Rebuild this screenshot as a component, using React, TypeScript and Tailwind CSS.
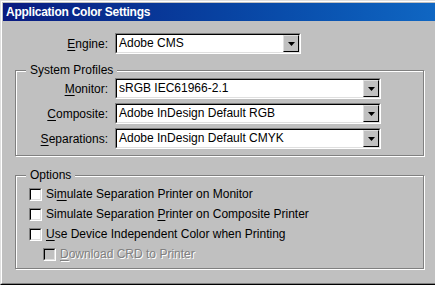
import React from 'react';

const face = 'bg-[#c0c0c0]';

const Key: React.FC<{ children: React.ReactNode }> = ({ children }) => (
  <span className="underline underline-offset-[2px]">{children}</span>
);

const Dropdown: React.FC<{ value: string; width: string }> = ({ value, width }) => (
  <div className={`${width} h-[21px] border border-t-[#808080] border-l-[#808080] border-b-white border-r-white`}>
    <div className="flex h-full border border-t-black border-l-black border-b-[#dfdfdf] border-r-[#dfdfdf] bg-white">
      <div className="flex-1 pl-[2px] leading-[17px] text-black">{value}</div>
      <div className={`flex w-[16px] items-center justify-center ${face} border border-t-[#dfdfdf] border-l-[#dfdfdf] border-b-black border-r-black`}>
        <svg width="7" height="4" viewBox="0 0 7 4">
          <path d="M0 0h7L3.5 4z" fill="#000" />
        </svg>
      </div>
    </div>
  </div>
);

const Row: React.FC<{ label: React.ReactNode; value: string; width: string; labelWidth: string }> = ({ label, value, width, labelWidth }) => (
  <div className="flex items-center">
    <div className={`${labelWidth} pr-[7px] text-right`}>{label}</div>
    <Dropdown value={value} width={width} />
  </div>
);

const Checkbox: React.FC<{ label: React.ReactNode; disabled?: boolean }> = ({ label, disabled }) => (
  <div className="flex h-[20px] items-center gap-[4px]">
    <div className="h-[13px] w-[13px] border border-t-[#808080] border-l-[#808080] border-b-white border-r-white">
      <div className={`h-full w-full border border-t-black border-l-black border-b-[#dfdfdf] border-r-[#dfdfdf] ${disabled ? face : 'bg-white'}`} />
    </div>
    <span className={disabled ? 'text-[#808080] [text-shadow:1px_1px_0_#fff]' : 'text-black'}>{label}</span>
  </div>
);

const Group: React.FC<{ title: string; height: string; children: React.ReactNode }> = ({ title, height, children }) => (
  <div className={`relative w-[409px] ${height} border border-[#808080] shadow-[inset_1px_1px_0_#fff,1px_1px_0_#fff]`}>
    <span className={`absolute -top-[9px] left-[10px] ${face} px-[4px] leading-[16px]`}>{title}</span>
    {children}
  </div>
);

export default function App() {
  return (
    <div className="h-[285px] w-[435px] overflow-hidden">
      <div
        className={`h-[285px] w-[445px] ${face} border-t border-l border-t-[#dfdfdf] border-l-[#dfdfdf] border-b border-b-black text-[12px] text-black`}
        style={{ fontFamily: '"Liberation Sans", Arial, sans-serif' }}
      >
        <div className="h-full border-t border-l border-t-white border-l-white border-b border-b-[#808080] p-px">
          <div className="flex h-[18px] items-center bg-gradient-to-r from-[#0a1a80] to-[#1068c4] pl-[3px] text-[12px] font-bold tracking-[-0.25px] text-white">
            Application Color Settings
          </div>

          <div className="pl-[12px] pt-[12px]">
            <Row
              labelWidth="w-[100px]"
              width="w-[186px]"
              label={<><Key>E</Key>ngine:</>}
              value="Adobe CMS"
            />

            <div className="mt-[16px]">
              <Group title="System Profiles" height="h-[86px]">
                <div className="flex flex-col gap-[4px] pt-[7px]">
                  <Row labelWidth="w-[99px]" width="w-[266px]" label={<><Key>M</Key>onitor:</>} value="sRGB IEC61966-2.1" />
                  <Row labelWidth="w-[99px]" width="w-[266px]" label={<><Key>C</Key>omposite:</>} value="Adobe InDesign Default RGB" />
                  <Row labelWidth="w-[99px]" width="w-[266px]" label={<><Key>S</Key>eparations:</>} value="Adobe InDesign Default CMYK" />
                </div>
              </Group>
            </div>

            <div className="mt-[19px]">
              <Group title="Options" height="h-[94px]">
                <div className="flex flex-col pl-[13px] pt-[8px]">
                  <Checkbox label={<>Si<Key>m</Key>ulate Separation Printer on Monitor</>} />
                  <Checkbox label={<>Simulate Separation <Key>P</Key>rinter on Composite Printer</>} />
                  <Checkbox label={<><Key>U</Key>se Device Independent Color when Printing</>} />
                  <div className="pl-[14px]">
                    <Checkbox disabled label={<><Key>D</Key>ownload CRD to Printer</>} />
                  </div>
                </div>
              </Group>
            </div>
          </div>
        </div>
      </div>
    </div>
  );
}
